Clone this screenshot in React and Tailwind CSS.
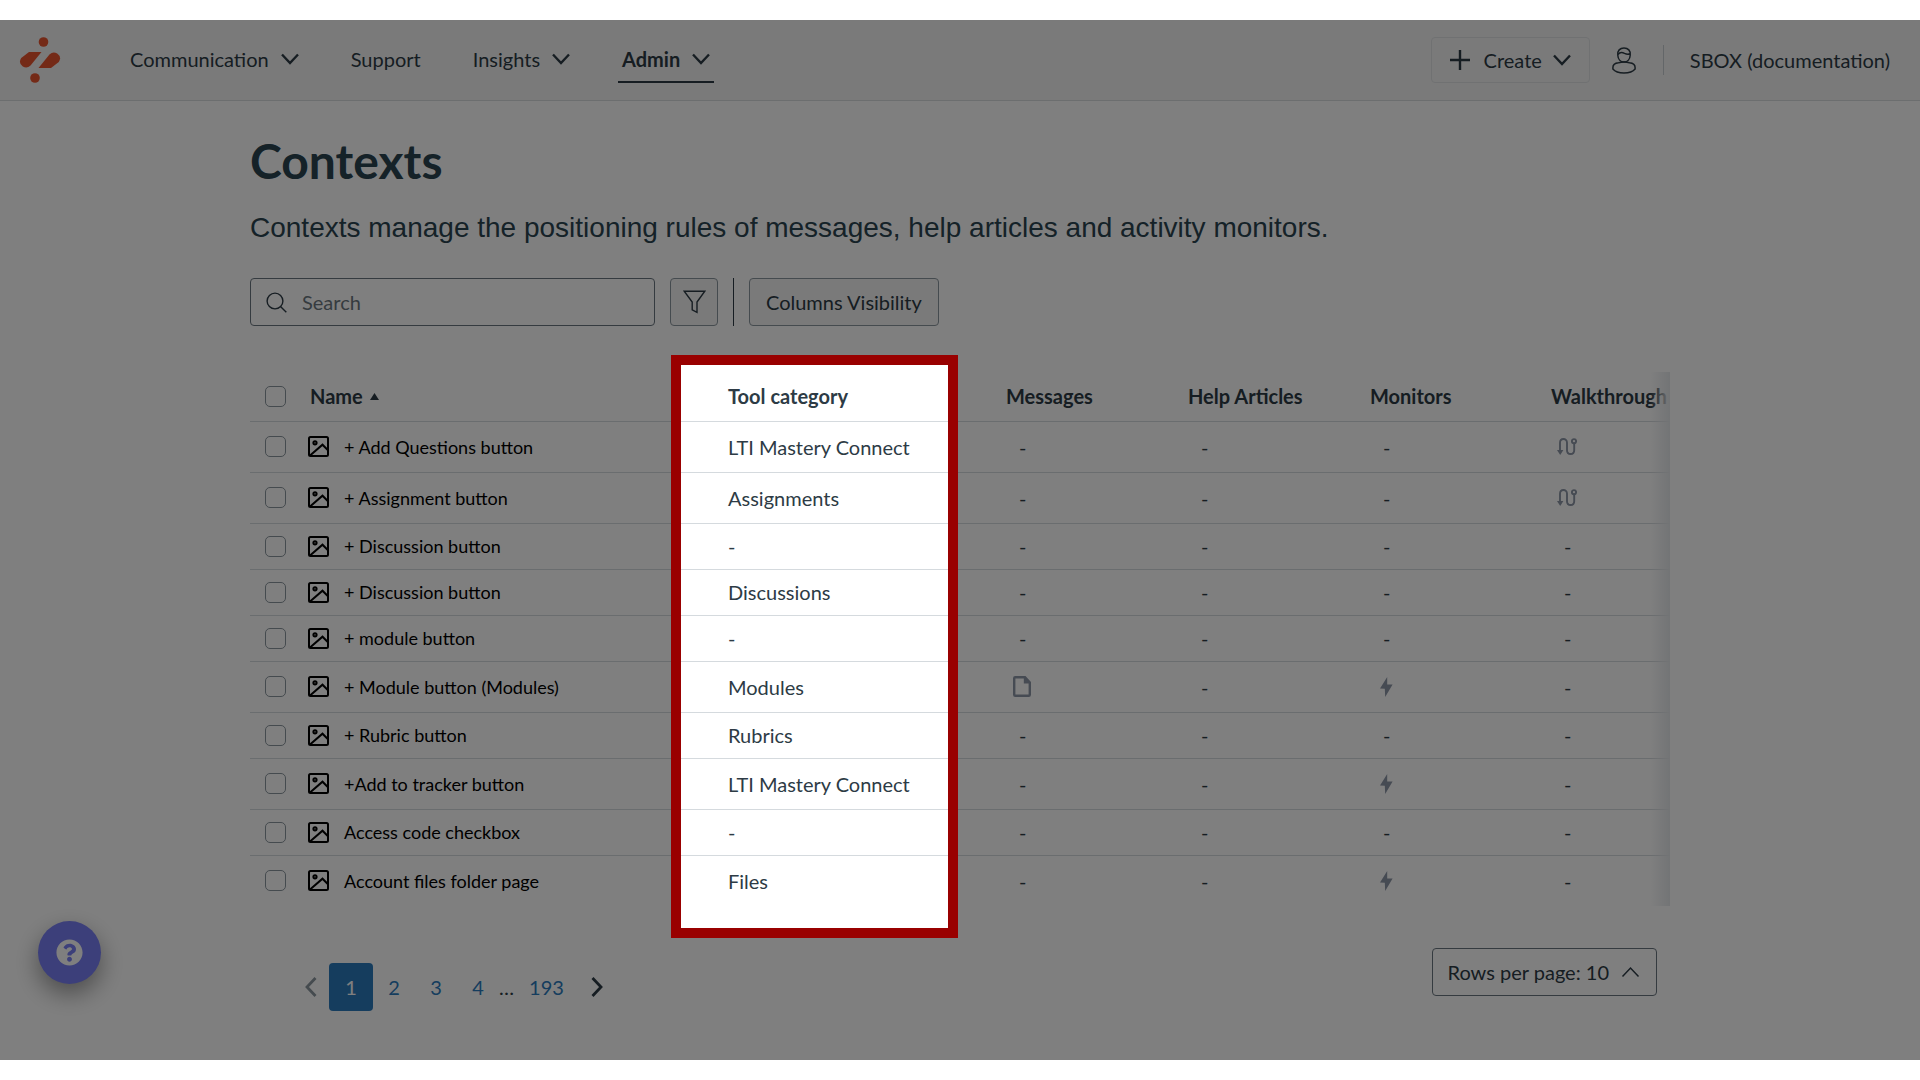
import React, { useState } from 'react';
import { FaQuestionCircle } from 'react-icons/fa';

const contexts = [
  { name: '+ Add Questions button', category: 'LTI Mastery Connect', walkthrough: true, tall: true },
  { name: '+ Assignment button', category: 'Assignments', walkthrough: true, tall: true },
  { name: '+ Discussion button', category: '-' },
  { name: '+ Discussion button', category: 'Discussions' },
  { name: '+ module button', category: '-' },
  { name: '+ Module button (Modules)', category: 'Modules', message: true, monitor: true, tall: true },
  { name: '+ Rubric button', category: 'Rubrics' },
  { name: '+Add to tracker button', category: 'LTI Mastery Connect', monitor: true, tall: true },
  { name: 'Access code checkbox', category: '-' },
  { name: 'Account files folder page', category: 'Files', monitor: true, tall: true }
];

const Logo = () => (
  <svg className="w-[42px] h-[46px]" viewBox="0 0 42 46" fill="#e8542f" aria-hidden="true">
    <circle cx="24.5" cy="5" r="4.8" />
    <circle cx="16" cy="41" r="4.8" />
    <path d="M10 15 H22.5 L11.5 28.5 Q8 32 3.8 29.5 Q-1 26 2.2 21 Z" />
    <path d="M32 31 H19.5 L30.5 17.5 Q34 14 38.2 16.5 Q43 20 39.8 25 Z" />
  </svg>
);

const Chevron = ({ className = 'w-[18px] h-[12px]', width = 2.4 }) => (
  <svg className={className} viewBox="0 0 18 12" fill="none" stroke="currentColor" strokeWidth={width} aria-hidden="true">
    <path d="M1 1.5 L9 10 L17 1.5" />
  </svg>
);

const PageArrow = ({ next }) => (
  <svg className="w-3 h-5" viewBox="0 0 12 20" fill="none" stroke="currentColor" strokeWidth="2.8" aria-hidden="true">
    <path d={next ? 'M1.5 1 L10 10 L1.5 19' : 'M10.5 1 L2 10 L10.5 19'} />
  </svg>
);

const UserIcon = () => (
  <svg className="w-6 h-[27px]" viewBox="0 0 24 27" fill="none" stroke="currentColor" strokeWidth="1.5" aria-hidden="true">
    <path d="M5.8 8.2 C5.2 3.6 8 1 12 1 C16 1 18.8 3.6 18.2 8.2 C18 12 15.6 15 12 15 C8.4 15 6 12 5.8 8.2 Z" />
    <path d="M5.9 7.5 C8 4.8 10.5 5.2 12.5 6.4 C14.5 7.4 16.8 7.4 18.2 6.8" />
    <path d="M6.5 15.8 C3.2 16.2 0.9 17.8 0.9 20.4 V22 C3 24.6 7 26 12 26 C17 26 21 24.6 23.1 22 V20.4 C23.1 17.8 20.8 16.2 17.5 15.8 Q12 14.4 6.5 15.8" />
  </svg>
);

const SearchIcon = () => (
  <svg className="w-[21px] h-[21px]" viewBox="0 0 21 21" fill="none" stroke="currentColor" strokeWidth="1.4" aria-hidden="true">
    <circle cx="9" cy="9" r="7.9" />
    <path d="M14.5 14.5 L20.3 20.3" />
  </svg>
);

const FilterIcon = () => (
  <svg className="w-[23px] h-[24px]" viewBox="0 0 23 24" fill="none" stroke="currentColor" strokeWidth="1.4" aria-hidden="true">
    <path d="M1.2 1.2 H21.8 L14 12 V22.3 L9.2 19.8 V12 Z" />
  </svg>
);

const ImageIcon = () => (
  <svg className="w-[21px] h-[21px] shrink-0" viewBox="0 0 21 21" fill="none" stroke="currentColor" strokeWidth="2" aria-hidden="true">
    <rect x="1" y="1" width="19" height="19" rx="1.5" />
    <circle cx="7" cy="6.8" r="1.6" strokeWidth="2" />
    <path d="M2 19.5 L14.5 8.7 L20 14.2" />
  </svg>
);

const WalkthroughIcon = () => (
  <svg className="w-5 h-[17px]" viewBox="0 0 20 17" fill="none" stroke="currentColor" strokeWidth="1.9" aria-hidden="true">
    <path d="M3 13 V4.8 C3 -0.2 10 -0.2 10 4.8 V12.2 C10 17.2 17.2 17.2 17.2 12.2 V5" />
    <circle cx="17" cy="3.2" r="2.1" />
    <path d="M0 12 H6.4 L3.2 17 Z" fill="currentColor" stroke="none" />
  </svg>
);

const MessageIcon = () => (
  <svg className="w-[18px] h-[21px]" viewBox="0 0 18 21" fill="none" stroke="currentColor" strokeWidth="2.4" aria-hidden="true">
    <path d="M2.2 1.2 H12 L16.8 6.5 V18.8 Q16.8 19.8 15.8 19.8 H2.2 Q1.2 19.8 1.2 18.8 V2.2 Q1.2 1.2 2.2 1.2 Z" />
    <path d="M10.8 1 V7.4 H17 L12 1 Z" fill="currentColor" stroke="none" />
  </svg>
);

const BoltIcon = () => (
  <svg className="w-[13px] h-5" viewBox="0 0 13 20" fill="currentColor" aria-hidden="true">
    <path d="M7.2 0 L0 11.6 L4.8 11.8 L5.2 20 L12.6 7.6 L7.2 7.6 Z" />
  </svg>
);

const NavItem = ({ label, menu, active }) => (
  <button
    type="button"
    className={`flex items-center gap-3 h-[46px] px-1 border-b-2 ${active ? 'border-[#2d3b45] font-bold' : 'border-transparent'}`}
  >
    {label}
    {menu && <Chevron />}
  </button>
);

const Checkbox = ({ label }) => (
  <input
    type="checkbox"
    aria-label={label}
    className="block appearance-none w-[21px] h-[21px] rounded-[5px] border border-[#8b969e] bg-white checked:bg-[#2d3b45]"
  />
);

// Dash when the context has nothing of this kind attached
const UsageCell = ({ used, children }) => (
  <td className="pl-[29px]">
    {used ? <div className="flex justify-center w-5 -ml-[7px] text-[#8d96a6]">{children}</div> : '-'}
  </td>
);

const App = () => {
  const [page, setPage] = useState(1);
  const pageClass = 'h-12 rounded text-[#2b7abc] text-xl';

  return (
    <div className="py-5 bg-white font-['Lato',sans-serif] text-xl text-[#2d3b45]">
      <div className="relative overflow-hidden h-[calc(100vh-40px)] min-h-[1040px]">
        {/* Top navigation */}
        <header className="flex items-center justify-between h-[81px] pl-[19px] pr-[30px] bg-[#f5f5f5] border-b border-[#d9dcde]">
          <div className="flex items-center">
            <a href="#home" aria-label="Home"><Logo /></a>
            <nav className="flex items-center gap-11 ml-[65px]">
              <NavItem label="Communication" menu />
              <NavItem label="Support" />
              <NavItem label="Insights" menu />
              <NavItem label="Admin" menu active />
            </nav>
          </div>
          <div className="flex items-center">
            <button type="button" className="flex items-center h-[46px] px-[18px] border border-[#e0e3e5] rounded">
              <svg className="w-5 h-5 mr-[14px]" viewBox="0 0 20 20" stroke="currentColor" strokeWidth="2.4" aria-hidden="true">
                <path d="M10 0 V20 M0 10 H20" />
              </svg>
              Create
              <Chevron className="w-[18px] h-[12px] ml-[11px]" />
            </button>
            <button type="button" aria-label="Account" className="ml-[22px]"><UserIcon /></button>
            <div className="w-px h-[30px] ml-[27px] mr-[26px] bg-[#c7cdd1]" />
            <span>SBOX (documentation)</span>
          </div>
        </header>

        <main className="max-w-[1420px] mx-auto">
          <h1 className="pt-[30px] text-[48px] leading-[60px] font-bold text-[#2b4450]">Contexts</h1>
          <p className="mt-[21px] text-[28px] leading-[32px] font-['Liberation_Sans',Arial,sans-serif] text-[#2b4450]">
            Contexts manage the positioning rules of messages, help articles and activity monitors.
          </p>

          {/* Toolbar */}
          <div className="flex items-center mt-[34px]">
            <label className="flex items-center w-[405px] h-12 pl-[15px] border border-[#6b7780] rounded">
              <SearchIcon />
              <input
                type="text"
                aria-label="Search"
                placeholder="Search"
                className="flex-1 min-w-0 ml-[15px] outline-none placeholder:text-[#6b7780]"
              />
            </label>
            <button
              type="button"
              aria-label="Filter"
              className="flex items-center justify-center w-12 h-12 ml-[15px] bg-[#f5f5f5] border border-[#8b969e] rounded"
            >
              <FilterIcon />
            </button>
            <div className="w-px h-12 mx-[15px] bg-[#2d3b45]" />
            <button type="button" className="h-12 px-4 bg-[#f5f5f5] border border-[#8b969e] rounded">
              Columns Visibility
            </button>
          </div>

          <div className="relative mt-[46px]">
            <div className="relative overflow-hidden">
              <table className="table-fixed w-full text-left">
                <colgroup>
                  <col className="w-[60px]" />
                  <col />
                  <col className="w-[278px]" />
                  <col className="w-[182px]" />
                  <col className="w-[182px]" />
                  <col className="w-[181px]" />
                  <col className="w-[135px]" />
                </colgroup>
                <thead>
                  <tr className="h-[49px] border-b border-[#d5dade]">
                    <th className="pl-[15px]"><Checkbox label="Select all" /></th>
                    <th>
                      <button type="button" className="flex items-center gap-[7px]">
                        Name
                        <svg className="w-[9px] h-[7px]" viewBox="0 0 9 7" fill="currentColor" aria-hidden="true">
                          <path d="M4.5 0 L9 7 H0 Z" />
                        </svg>
                      </button>
                    </th>
                    <th className="pl-4">Tool category</th>
                    <th className="pl-4">Messages</th>
                    <th className="pl-4">Help Articles</th>
                    <th className="pl-4">Monitors</th>
                    <th className="pl-4">Walkthrough</th>
                  </tr>
                </thead>
                <tbody>
                  {contexts.map((item, index) => (
                    <tr key={index} className={`border-b border-[#d5dade] last:border-b-0 ${item.tall ? 'h-[51px]' : 'h-[46px]'}`}>
                      <td className="pl-[15px]"><Checkbox label={item.name} /></td>
                      <td>
                        <div className="flex items-center gap-[15px] -ml-[2px] text-lg text-black">
                          <ImageIcon />
                          {item.name}
                        </div>
                      </td>
                      <td className="pl-4">{item.category}</td>
                      <UsageCell used={item.message}><MessageIcon /></UsageCell>
                      <UsageCell />
                      <UsageCell used={item.monitor}><BoltIcon /></UsageCell>
                      <UsageCell used={item.walkthrough}><WalkthroughIcon /></UsageCell>
                    </tr>
                  ))}
                </tbody>
              </table>
              {/* Scroll shade on the right edge */}
              <div className="absolute inset-y-0 right-0 w-5 bg-linear-to-r from-transparent to-[#e6e9ec]" />
            </div>

            {/* Spotlight on the Tool category column, dims everything else */}
            <div className="absolute z-10 left-[421px] -top-[17px] -bottom-8 w-[287px] border-[10px] border-[#990000] shadow-[0_0_0_3000px_rgba(0,0,0,0.5)] pointer-events-none" />
          </div>

          {/* Footer */}
          <div className="flex items-start justify-between mt-[42px] pl-[55px] pr-[13px]">
            <nav aria-label="Pagination" className="flex items-center mt-[15px]">
              <button type="button" aria-label="Previous page" className="mr-3 text-[#8b969e]"><PageArrow /></button>
              {[1, 2, 3, 4].map((n) => (
                <button
                  key={n}
                  type="button"
                  onClick={() => setPage(n)}
                  className={n === page ? 'w-11 h-12 rounded bg-[#2b7abc] text-white text-xl' : `w-[42px] ${pageClass}`}
                >
                  {n}
                </button>
              ))}
              <span className="w-[15px]">…</span>
              <button type="button" className={`w-[65px] ${pageClass}`}>193</button>
              <button type="button" aria-label="Next page" className="ml-3"><PageArrow next /></button>
            </nav>
            <button type="button" className="flex items-center gap-[11px] h-12 px-[15px] border border-[#6b7780] rounded">
              Rows per page: 10
              <Chevron className="w-[21px] h-[12px] rotate-180" width={1.5} />
            </button>
          </div>
        </main>

        <button
          type="button"
          aria-label="Help"
          className="absolute left-[38px] bottom-[76px] flex items-center justify-center w-[63px] h-[63px] rounded-full bg-[#787ef4] text-white shadow-[0_10px_24px_rgba(0,0,0,0.4)]"
        >
          <FaQuestionCircle className="w-[27px] h-[27px]" />
        </button>
      </div>
    </div>
  );
};

export default App;
